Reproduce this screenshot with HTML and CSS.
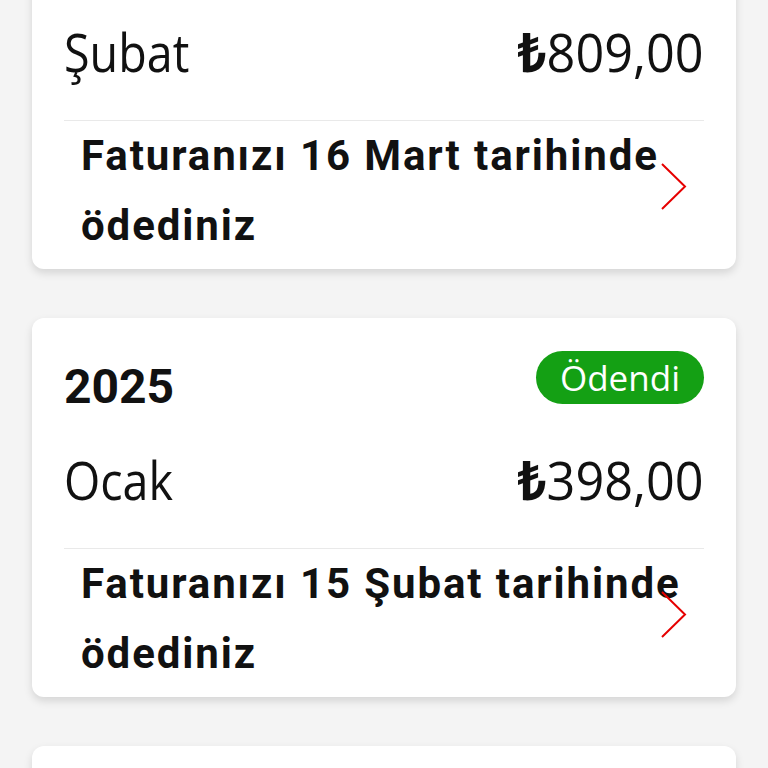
FILE: index.html
```html
<!DOCTYPE html>
<html lang="tr">
<head>
<meta charset="UTF-8">
<meta name="viewport" content="width=device-width, initial-scale=1.0">
<title>Faturalarım</title>
<link rel="stylesheet" href="styles.css">
</head>
<body>
<main class="bills">
  <section class="bill-card">
    <div class="bill-head">
      <span class="bill-year">2025</span>
      <span class="badge">Ödendi</span>
    </div>
    <div class="bill-row">
      <span class="bill-month">Şubat</span>
      <span class="bill-amount"><span class="lira">₺</span>809,00</span>
    </div>
    <div class="bill-info">
      <p class="bill-text">Faturanızı 16 Mart tarihinde ödediniz</p>
      <svg class="chevron" viewBox="0 0 26 48" width="26" height="48"><path d="M1 1 L24 23.5 L1 46" fill="none" stroke="#e60000" stroke-width="2"/></svg>
    </div>
  </section>

  <section class="bill-card">
    <div class="bill-head">
      <span class="bill-year">2025</span>
      <span class="badge">Ödendi</span>
    </div>
    <div class="bill-row">
      <span class="bill-month">Ocak</span>
      <span class="bill-amount"><span class="lira">₺</span>398,00</span>
    </div>
    <div class="bill-info">
      <p class="bill-text">Faturanızı 15 Şubat tarihinde ödediniz</p>
      <svg class="chevron" viewBox="0 0 26 48" width="26" height="48"><path d="M1 1 L24 23.5 L1 46" fill="none" stroke="#e60000" stroke-width="2"/></svg>
    </div>
  </section>

  <section class="bill-card">
    <div class="bill-head">
      <span class="bill-year">2024</span>
      <span class="badge">Ödendi</span>
    </div>
    <div class="bill-row">
      <span class="bill-month">Aralık</span>
      <span class="bill-amount"><span class="lira">₺</span>398,00</span>
    </div>
  </section>
</main>
</body>
</html>
```

FILE: styles.css
```css
body {
  margin: 0;
  padding: 0;
  background-color: #f4f4f4;
  color: #111;
  font-family: "Open Sans", "Noto Sans", sans-serif;
  overflow: hidden;
}

/* list is scrolled: first card starts above the window */
.bills {
  display: flex;
  flex-direction: column;
  gap: 49px;
  margin-top: -110px;
  padding: 0 32px 40px;
}

.bill-card {
  background: #fff;
  border-radius: 12px;
  padding: 33px 32px 8px;
  box-shadow: 0 4px 8px rgba(0, 0, 0, 0.13);
}

.bill-head {
  display: flex;
  justify-content: space-between;
  align-items: flex-end;
  height: 53px;
}

.bill-year {
  font-family: Roboto, "Liberation Sans", sans-serif;
  font-weight: 700;
  font-size: 48px;
  line-height: 35px;
}

.badge {
  background-color: #14a014;
  color: #fff;
  font-size: 35px;
  font-weight: 500;
  line-height: 53px;
  padding: 0 24px;
  border-radius: 27px;
}

.bill-row {
  display: flex;
  justify-content: space-between;
  margin-top: 40px;
  padding-bottom: 32px;
  border-bottom: 1px solid #e9e9e9;
  font-size: 53px;
  font-weight: 400;
  line-height: 72px;
}

.bill-month {
  display: inline-block;
  transform: scaleX(0.88);
  transform-origin: left center;
}

.bill-amount {
  display: inline-block;
  transform: scaleX(0.95);
  transform-origin: right center;
}

.lira {
  font-weight: 700;
}

.bill-info {
  position: relative;
  padding: 0 0 0 17px;
}

.bill-text {
  margin: 0;
  font-family: Roboto, "Liberation Sans", sans-serif;
  font-weight: 700;
  font-size: 42px;
  line-height: 70px;
  letter-spacing: 1.9px;
}

.chevron {
  position: absolute;
  right: 17px;
  top: 42px;
}
```
